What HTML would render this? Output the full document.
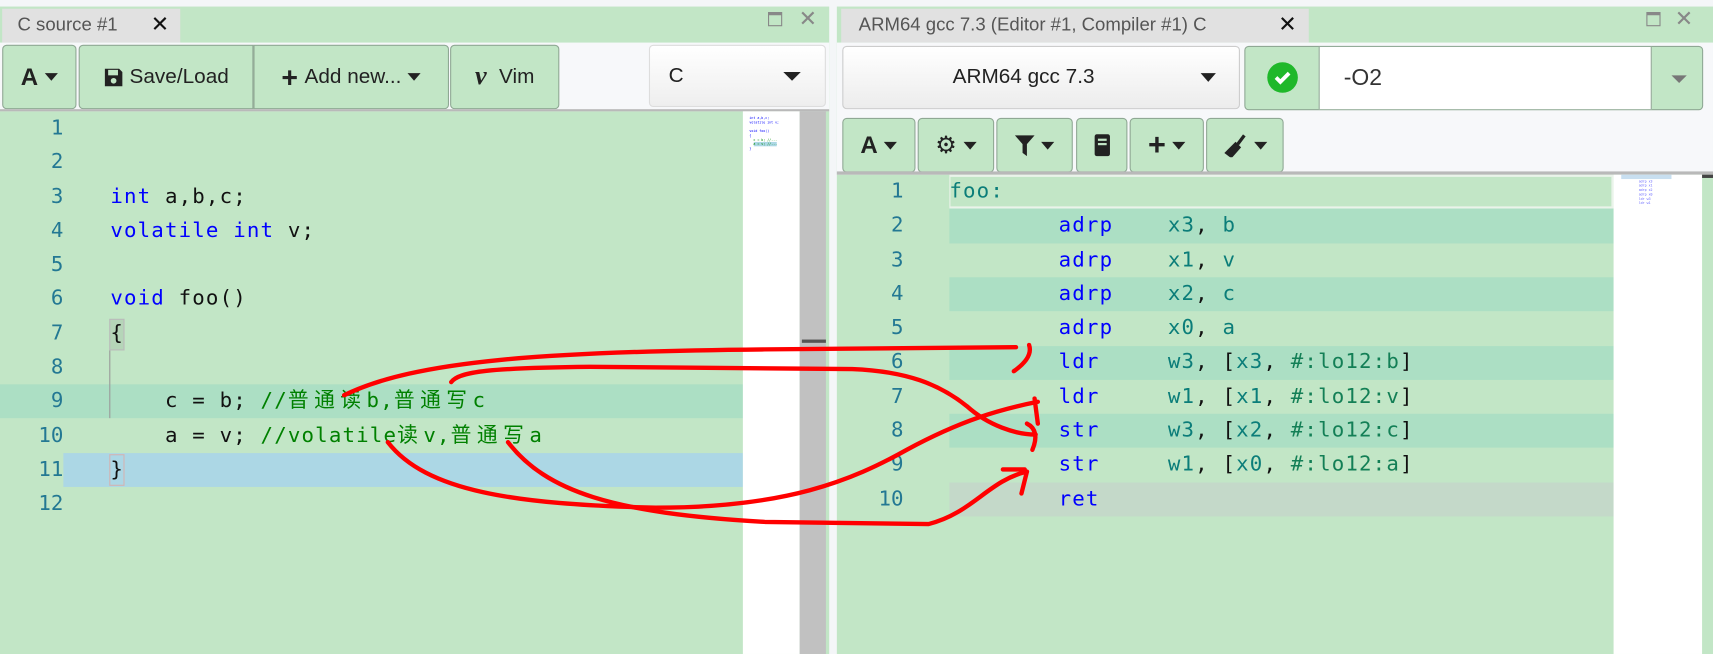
<!DOCTYPE html>
<html><head><meta charset="utf-8"><style>
*{margin:0;padding:0;box-sizing:border-box}
html,body{width:1713px;height:654px;overflow:hidden;background:#f4f6f8}
#w{position:absolute;left:0;top:0;width:1568px;height:599px;transform:scale(1.09247,1.0918);transform-origin:0 0;font-family:"Liberation Sans",sans-serif}
.abs{position:absolute}
.panel{background:#c2e6c6}
.tab{position:absolute;background:#e1e1e1;color:#555;font-size:17px;line-height:30px;padding-left:14px}
.tab b{position:absolute;top:0;font-weight:normal;color:#111;font-size:20px}
.tb{position:absolute;background:#f7f8fa}
.btn{position:absolute;background:#c2e6c6;border:1px solid #8fa894;border-radius:4px;color:#222;font-size:19px;display:flex;align-items:center;justify-content:center;gap:6px}
.tri{display:inline-block;width:0;height:0;border-left:6px solid transparent;border-right:6px solid transparent;border-top:7px solid #222}
.code{font-family:"DejaVu Sans Mono","Liberation Mono","Noto Sans CJK SC",monospace;white-space:pre;font-size:19px;letter-spacing:1.06px;line-height:31.3px;color:#111}
.cj{letter-spacing:5px}
.ln{position:absolute;color:#237893;font-family:"DejaVu Sans Mono","Liberation Mono",monospace;font-size:19px;text-align:right;width:50px;white-space:pre;line-height:31.3px}
.kw{color:#0000ff}.cm{color:#008000}.rg{color:#0b7d79}.lb{color:#137f56}
</style></head><body><div id="w">
<!-- LEFT PANEL -->
<div class="abs panel" style="left:0;top:6px;width:759px;height:593px"></div>
<div class="tab" style="left:2px;top:8px;width:163px;height:31px">C source #1<b style="left:136px">✕</b></div>
<div class="abs" style="left:703px;top:11px;width:13px;height:13px;border:1.5px solid #888;border-top-width:3px"></div>
<div class="abs" style="left:731px;top:5px;color:#888;font-size:20px">✕</div>
<div class="tb" style="left:0;top:39px;width:759px;height:63px"></div>
<div class="btn" style="left:2px;top:41px;width:68px;height:59px"><span style="font-weight:bold;font-size:22px">A</span><span class="tri"></span></div>
<div class="btn" style="left:72px;top:41px;width:160px;height:59px;border-radius:4px 0 0 4px"><svg width="18" height="20" viewBox="0 0 18 20"><path d="M1 2h13l3 3v13H1z" fill="#222"/><rect x="4" y="3" width="9" height="5" fill="#c2e6c6"/><circle cx="9" cy="13" r="2.6" fill="#c2e6c6"/></svg>Save/Load</div>
<div class="btn" style="left:232px;top:41px;width:179px;height:59px;border-radius:0 4px 4px 0"><span style="font-weight:bold;font-size:26px;line-height:20px">+</span>Add new...<span class="tri"></span></div>
<div class="btn" style="left:412px;top:41px;width:100px;height:59px"><span style="font-weight:bold;font-style:italic;font-family:'Liberation Serif',serif;font-size:24px">v</span>&nbsp;Vim</div>
<div class="abs" style="left:594px;top:41px;width:162px;height:57px;background:linear-gradient(#fff,#eee);border:1px solid #ddd;border-radius:4px;font-size:19px;line-height:55px;padding-left:17px;color:#222">C<span class="tri" style="position:absolute;left:122px;top:24px;border-width:8px 8px 0;"></span></div>
<div class="abs" style="left:0;top:100px;width:759px;height:2px;background:#b9b9b9"></div>
<!-- left editor -->
<div class="abs" style="left:0;top:352px;width:680px;height:31.3px;background:#acdfc4"></div>
<div class="abs" style="left:58px;top:414.6px;width:622px;height:31.3px;background:#acd7e5"></div>
<div class="abs" style="left:100px;top:321px;width:1px;height:62px;background:#999"></div>
<div class="abs" style="left:100px;top:292px;width:14px;height:29px;background:#b5d5b8;border:1px solid #bbb"></div>
<div class="abs" style="left:100px;top:416px;width:14px;height:29px;border:1px solid #d3b3b3"></div>
<div class="ln" style="left:8px;top:102px">1
2
3
4
5
6
7
8
9
10
11
12</div>
<div class="abs code" style="left:101px;top:102px">

<span class="kw">int</span> a,b,c;
<span class="kw">volatile</span> <span class="kw">int</span> v;

<span class="kw">void</span> foo()
{

    c = b; <span class="cm">//<span class="cj">普通读</span>b,<span class="cj">普通写</span>c</span>
    a = v; <span class="cm">//volatile<span class="cj">读</span>v,<span class="cj">普通写</span>a</span>
}</div>
<div class="abs" style="left:680px;top:102px;width:52px;height:497px;background:#fff"></div>
<div class="abs" style="left:686px;top:106px;font-size:3px;line-height:4px;color:#00f;white-space:pre;font-family:monospace">int a,b,c;
volatile int v;

void foo()
{
  <span style="color:#080">c = b; //...</span>
  <span style="color:#080;background:#acd7e5">a = v; //...</span>
}</div>
<div class="abs" style="left:732px;top:102px;width:24px;height:497px;background:#c1c1c1"></div>
<div class="abs" style="left:734px;top:311px;width:22px;height:3px;background:#555"></div>
<!-- RIGHT PANEL -->
<div class="abs panel" style="left:766px;top:6px;width:802px;height:593px"></div>
<div class="tab" style="left:770px;top:8px;width:428px;height:31px;padding-left:16px">ARM64 gcc 7.3 (Editor #1, Compiler #1) C<b style="left:400px">✕</b></div>
<div class="abs" style="left:1507px;top:11px;width:13px;height:13px;border:1.5px solid #888;border-top-width:3px"></div>
<div class="abs" style="left:1533px;top:5px;color:#888;font-size:20px">✕</div>
<div class="tb" style="left:766px;top:39px;width:802px;height:121px"></div>
<div class="abs" style="left:771px;top:42px;width:364px;height:58px;background:linear-gradient(#fff,#ececec);border:1px solid #ccc;border-radius:4px;font-size:19px;line-height:56px;color:#222"><span style="position:absolute;left:100px">ARM64 gcc 7.3</span><span class="tri" style="position:absolute;left:327px;top:24px;border-width:8px 7px 0"></span></div>
<div class="abs" style="left:1139px;top:42px;width:420px;height:59px;border:1px solid #8fa894;border-radius:4px;background:#c2e6c6"></div>
<div class="abs" style="left:1160px;top:57px;width:28px;height:28px;border-radius:50%;background:#1fb82a"><svg width="28" height="28"><path d="M8 14l4 4 8-8" stroke="#fff" stroke-width="3.5" fill="none"/></svg></div>
<div class="abs" style="left:1207px;top:43px;width:305px;height:57px;background:#fff;border-left:1px solid #8fa894;border-right:1px solid #8fa894;font-size:21px;line-height:57px;padding-left:22px;color:#333">-O2</div>
<div class="tri abs" style="left:1530px;top:69px;border-top-color:#777;border-width:7px 7px 0"></div>
<div class="btn" style="left:771px;top:108px;width:67px;height:50px"><span style="font-weight:bold;font-size:22px">A</span><span class="tri"></span></div>
<div class="btn" style="left:840px;top:108px;width:70px;height:50px"><span style="font-size:22px">⚙</span><span class="tri"></span></div>
<div class="btn" style="left:912px;top:108px;width:70px;height:50px"><svg width="18" height="20"><path d="M0 1h18l-7 8v11l-4-3V9z" fill="#222"/></svg><span class="tri"></span></div>
<div class="btn" style="left:985px;top:108px;width:47px;height:50px"><svg width="16" height="22"><rect x="1" y="1" width="14" height="20" rx="2" fill="#222"/><rect x="4" y="5" width="8" height="2" fill="#c2e6c6"/><rect x="4" y="9" width="8" height="2" fill="#c2e6c6"/></svg></div>
<div class="btn" style="left:1034px;top:108px;width:68px;height:50px"><span style="font-weight:bold;font-size:28px;line-height:20px">+</span><span class="tri"></span></div>
<div class="btn" style="left:1104px;top:108px;width:71px;height:50px"><svg width="22" height="22"><path d="M3 18l4 3 7-8-3-3z M13 10l6-8" stroke="#222" stroke-width="3" fill="#222"/></svg><span class="tri"></span></div>
<div class="abs" style="left:766px;top:157px;width:802px;height:3px;background:#b9b9b9"></div>
<!-- asm -->
<div class="abs" style="left:869px;top:160px;width:608px;height:31px;border:2px solid #eaf3ea;border-left-width:1px"></div>
<div class="abs" style="left:869px;top:191.3px;width:608px;height:31.3px;background:#acdfc4"></div>
<div class="abs" style="left:869px;top:253.9px;width:608px;height:31.3px;background:#acdfc4"></div>
<div class="abs" style="left:869px;top:316.5px;width:608px;height:31.3px;background:#acdfc4"></div>
<div class="abs" style="left:869px;top:379.1px;width:608px;height:31.3px;background:#acdfc4"></div>
<div class="abs" style="left:869px;top:441.7px;width:608px;height:31.3px;background:#c4d9c9"></div>
<div class="ln" style="left:777px;top:160px">1
2
3
4
5
6
7
8
9
10</div>
<div class="abs code" style="left:869px;top:160px"><span class="rg">foo:</span>
        <span class="kw">adrp</span>    <span class="rg">x3</span>, <span class="rg">b</span>
        <span class="kw">adrp</span>    <span class="rg">x1</span>, <span class="rg">v</span>
        <span class="kw">adrp</span>    <span class="rg">x2</span>, <span class="rg">c</span>
        <span class="kw">adrp</span>    <span class="rg">x0</span>, <span class="rg">a</span>
        <span class="kw">ldr</span>     <span class="rg">w3</span>, [<span class="rg">x3</span>, <span class="lb">#:lo12:b</span>]
        <span class="kw">ldr</span>     <span class="rg">w1</span>, [<span class="rg">x1</span>, <span class="lb">#:lo12:v</span>]
        <span class="kw">str</span>     <span class="rg">w3</span>, [<span class="rg">x2</span>, <span class="lb">#:lo12:c</span>]
        <span class="kw">str</span>     <span class="rg">w1</span>, [<span class="rg">x0</span>, <span class="lb">#:lo12:a</span>]
        <span class="kw">ret</span></div>
<div class="abs" style="left:1477px;top:160px;width:81px;height:439px;background:#fff"></div>
<div class="abs" style="left:1484px;top:160px;width:46px;height:4px;background:#c8dff0"></div>
<div class="abs" style="left:1558px;top:160px;width:10px;height:3px;background:#444"></div>
<div class="abs" style="left:1500px;top:164px;font-size:3px;line-height:4px;color:#66f;white-space:pre;font-family:monospace">adrp x3
adrp x1
adrp x2
adrp x0
ldr w3
ldr w1</div>
<!-- arrows -->
<svg class="abs" style="left:0;top:0" width="1568" height="599" fill="none" stroke="#ff0000" stroke-width="4" stroke-linecap="round" stroke-linejoin="round">
<path d="M315,362 C380,330 500,322 700,320 L930,318"/>
<path d="M942,316 C945,325 938,333 928,340"/>
<path d="M413,350 C420,340 450,337 540,336 L780,338 C830,340 860,352 885,372 C905,390 930,398 948,398"/>
<path d="M940,388 C948,392 950,400 945,412"/>
<path d="M355,405 C390,450 470,462 600,465 C720,465 780,440 830,412 C880,385 915,375 950,368"/>
<path d="M947,365 L950,388"/>
<path d="M465,405 C500,450 560,470 700,478 L850,480 C890,470 905,440 940,432"/>
<path d="M918,430 L938,430 M940,432 L935,452"/>
</svg>
</div></body></html>
